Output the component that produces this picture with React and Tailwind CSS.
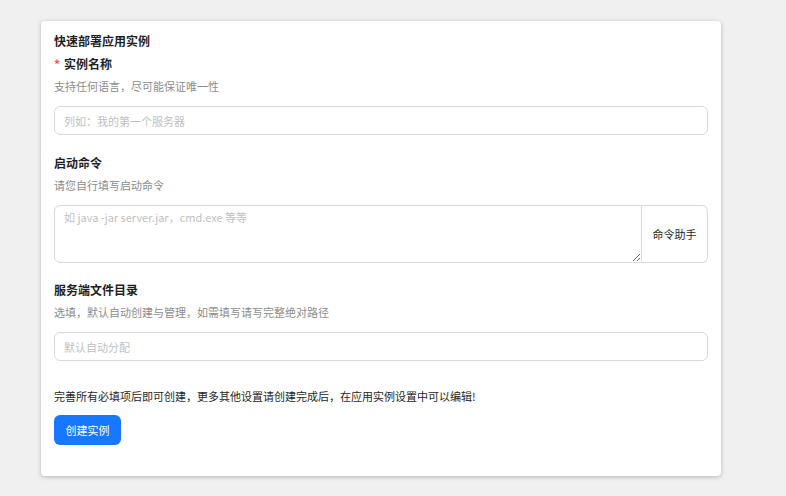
import React from "react";

const Label = ({ required, children }) => (
  <div className="text-[12px] font-bold text-[#1f1f1f] leading-[18px]">
    {required && <span className="text-[#ff4d4f] mr-1">*</span>}
    {children}
  </div>
);

const Desc = ({ children }) => (
  <div className="text-[11px] text-[#8c8c8c] leading-[16px] mt-[5px]">{children}</div>
);

export default function App() {
  return (
    <div
      className="w-[786px] h-[496px] bg-[#f0f0f0] pt-[21px] pl-[41px]"
      style={{ fontFamily: "'Noto Sans CJK SC', 'Noto Sans', sans-serif" }}
    >
      <div className="w-[680px] h-[455px] bg-white rounded-[4px] shadow-[0_1px_4px_rgba(0,0,0,0.25)] px-[13px] pt-[11px]">
        <div className="text-[12px] font-bold text-[#1f1f1f] leading-[18px]">快速部署应用实例</div>

        {/* 实例名称 */}
        <div className="mt-[5px]">
          <Label required>实例名称</Label>
          <Desc>支持任何语言，尽可能保证唯一性</Desc>
          <input
            className="mt-[12px] w-full h-[29px] border border-[#d9d9d9] rounded-[6px] px-[9px] text-[11px] outline-none placeholder:text-[#bfbfbf]"
            placeholder="列如：我的第一个服务器"
          />
        </div>

        {/* 启动命令 */}
        <div className="mt-[19px]">
          <Label>启动命令</Label>
          <Desc>请您自行填写启动命令</Desc>
          <div className="mt-[12px] flex h-[58px]">
            <textarea
              className="flex-1 h-full border border-[#d9d9d9] rounded-l-[6px] px-[9px] py-[3px] text-[11px] outline-none placeholder:text-[#bfbfbf]"
              placeholder="如 java -jar server.jar，cmd.exe 等等"
            />
            <button className="w-[66px] h-full border border-l-0 border-[#d9d9d9] rounded-r-[6px] text-[11px] text-[#1f1f1f] bg-white">
              命令助手
            </button>
          </div>
        </div>

        {/* 服务端文件目录 */}
        <div className="mt-[18px]">
          <Label>服务端文件目录</Label>
          <Desc>选填，默认自动创建与管理，如需填写请写完整绝对路径</Desc>
          <input
            className="mt-[12px] w-full h-[29px] border border-[#d9d9d9] rounded-[6px] px-[9px] text-[11px] outline-none placeholder:text-[#bfbfbf]"
            placeholder="默认自动分配"
          />
        </div>

        <div className="mt-[27px] text-[11px] text-[#262626] leading-[16px]">
          完善所有必填项后即可创建，更多其他设置请创建完成后，在应用实例设置中可以编辑!
        </div>

        <button className="mt-[11px] w-[67px] h-[30px] rounded-[6px] bg-[#1677ff] text-white text-[11px]">
          创建实例
        </button>
      </div>
    </div>
  );
}
